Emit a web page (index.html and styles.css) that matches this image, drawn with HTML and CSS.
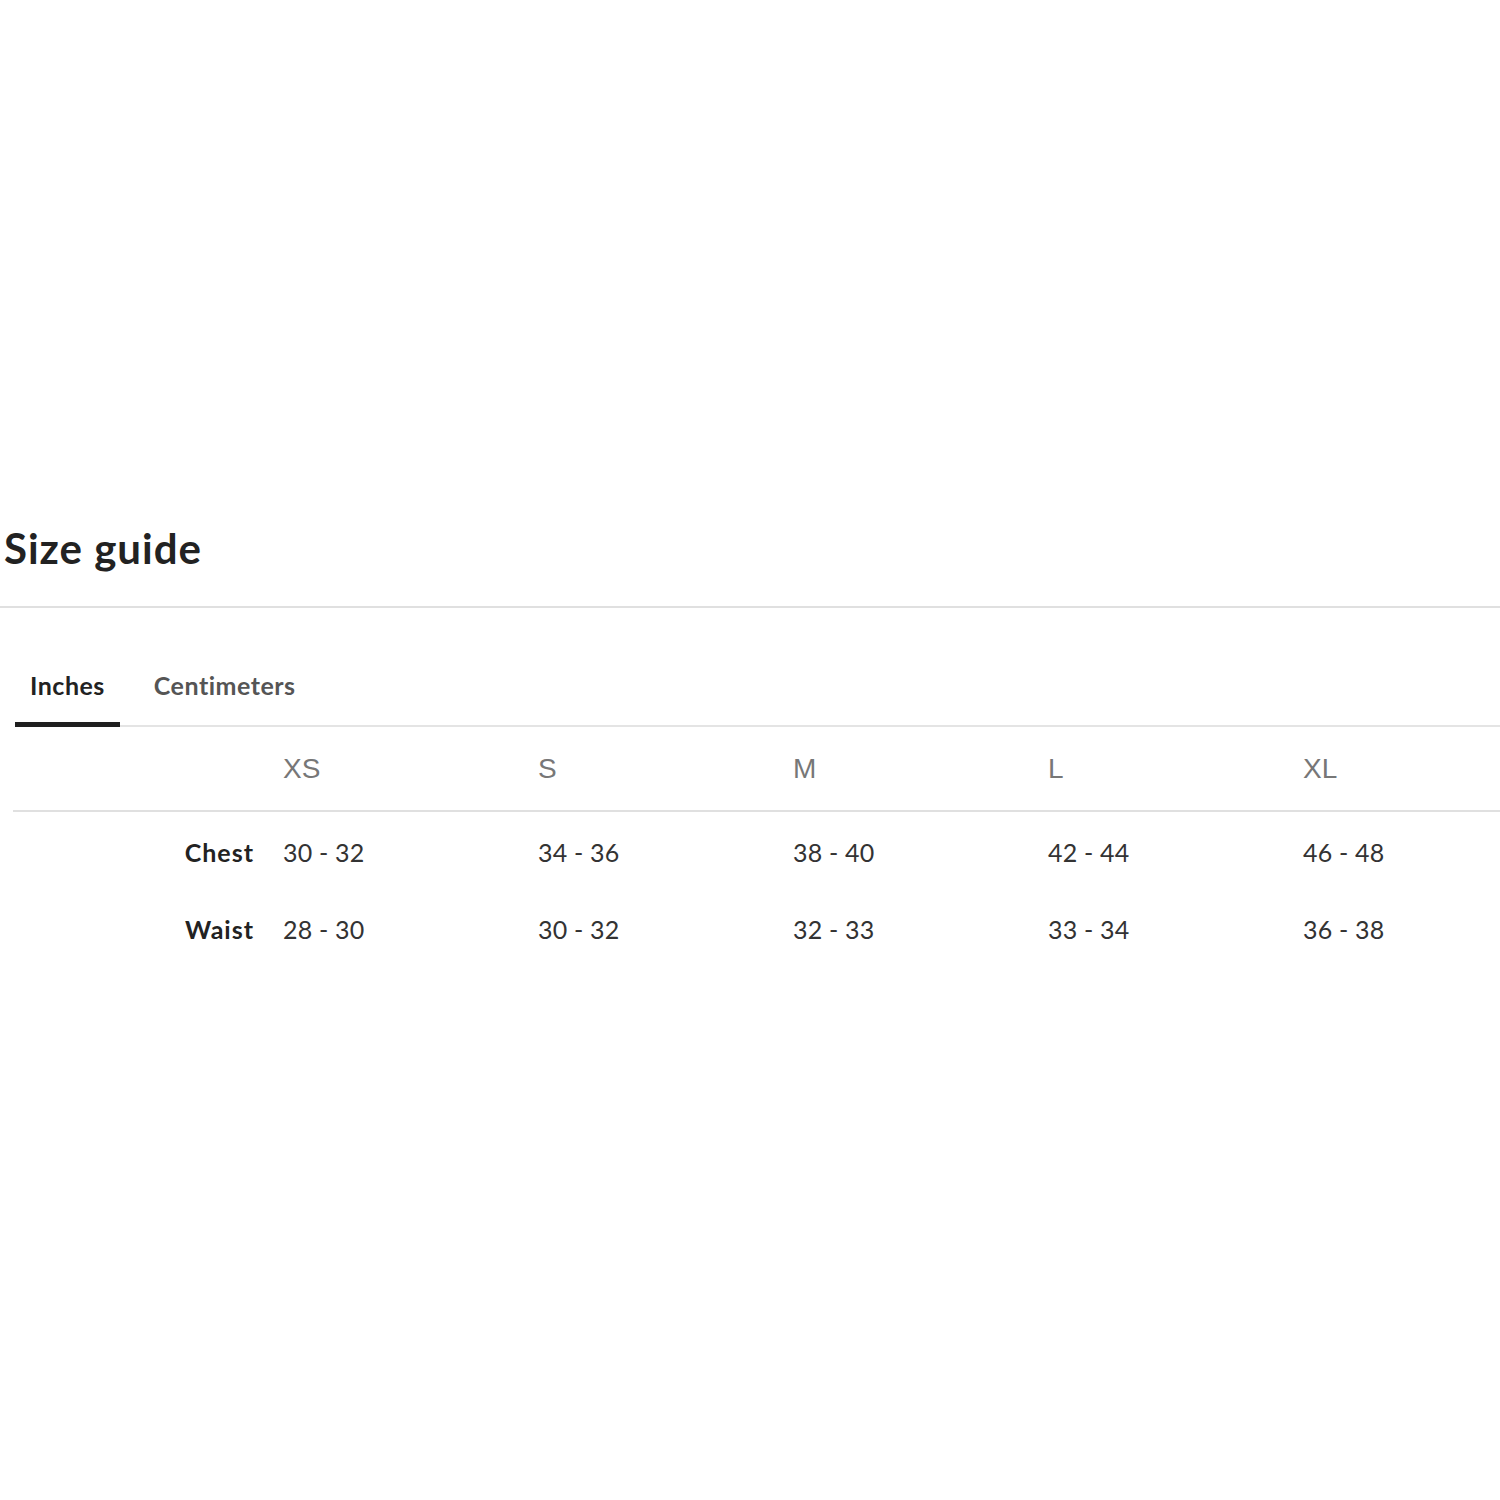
FILE: index.html
```html
<!DOCTYPE html>
<html>
<head>
<meta charset="utf-8">
<link rel="stylesheet" href="styles.css">
</head>
<body>
<div class="page">
  <h1 class="title">Size guide</h1>
  <div class="tabs-wrap">
    <div class="tabs">
      <div class="tab active">Inches</div>
      <div class="tab">Centimeters</div>
    </div>
  </div>
  <div class="table">
    <div class="row head">
      <div class="cell label"></div>
      <div class="cell">XS</div>
      <div class="cell">S</div>
      <div class="cell">M</div>
      <div class="cell">L</div>
      <div class="cell">XL</div>
    </div>
    <div class="row body first">
      <div class="cell label">Chest</div>
      <div class="cell">30 - 32</div>
      <div class="cell">34 - 36</div>
      <div class="cell">38 - 40</div>
      <div class="cell">42 - 44</div>
      <div class="cell">46 - 48</div>
    </div>
    <div class="row body">
      <div class="cell label">Waist</div>
      <div class="cell">28 - 30</div>
      <div class="cell">30 - 32</div>
      <div class="cell">32 - 33</div>
      <div class="cell">33 - 34</div>
      <div class="cell">36 - 38</div>
    </div>
  </div>
</div>
</body>
</html>
```

FILE: styles.css
```css
html, body {
  margin: 0;
  padding: 0;
  background: #ffffff;
}
body {
  font-family: "Lato", "Open Sans", sans-serif;
  color: #222;
}
.page {
  padding-top: 520px;
}
.title {
  margin: 0;
  padding: 0 0 0 4px;
  height: 86px;
  line-height: 56px;
  font-size: 42px;
  letter-spacing: 1px;
  font-weight: 700;
  color: #222;
  border-bottom: 2px solid #e0e0e0;
}
.tabs-wrap {
  padding: 56px 0 0 15px;
}
.tabs {
  display: flex;
  border-bottom: 2px solid #e4e4e4;
}
.tab {
  font-size: 25px;
  letter-spacing: 0.5px;
  font-weight: 700;
  color: #555;
  padding: 0 15px;
  height: 58px;
  line-height: 42px;
  margin-bottom: -2px;
  border-bottom: 5px solid transparent;
  margin-right: 19px;
}
.tab.active {
  color: #222;
  border-bottom-color: #1f1f1f;
}
.table {
  margin-left: 13px;
}
.row {
  display: grid;
  grid-template-columns: 255px 255px 255px 255px 255px 1fr;
}
.row.head {
  height: 83px;
  border-bottom: 2px solid #e0e0e0;
  align-items: center;
}
.row.head .cell {
  font-size: 28px;
  color: #777;
  font-family: "Liberation Sans", "Lato", sans-serif;
  padding-left: 15px;
}
.row.body {
  height: 77px;
  align-items: center;
}
.row.body.first {
  margin-top: 1px;
}
.row.body .cell {
  font-size: 25px;
  letter-spacing: 0.2px;
  color: #333;
  padding-left: 15px;
}
.row.body .cell.label {
  text-align: right;
  font-weight: 700;
  letter-spacing: 1px;
  color: #222;
  padding-left: 0;
  padding-right: 14px;
}
```
